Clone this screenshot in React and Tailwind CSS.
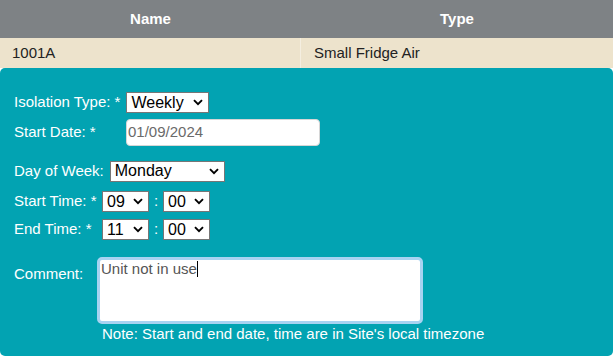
import React from 'react'

const FONT = { fontFamily: '"Liberation Sans", Arial, sans-serif' }

function Chevron() {
  return (
    <svg width="10" height="7" viewBox="0 0 10 7" className="shrink-0">
      <path d="M1 1.2 L5 5.2 L9 1.2" fill="none" stroke="#000" strokeWidth="1.9" />
    </svg>
  )
}

// Select look-alike: gray 1px border, square corners, bold chevron on the right
function Select({ value, width }) {
  return (
    <div
      className="flex items-center justify-between h-[21px] bg-white border border-[#767676] pl-[4px] pr-[5px] text-[16px] leading-none text-black"
      style={{ width }}
    >
      <span>{value}</span>
      <Chevron />
    </div>
  )
}

export default function App() {
  return (
    <div className="w-[613px] h-[358px] bg-white overflow-hidden" style={FONT}>
      <div className="grid grid-cols-[301px_312px] h-[38px] bg-[#7e8285] text-white font-bold text-[15px]">
        <div className="flex items-center justify-center">Name</div>
        <div className="flex items-center justify-center">Type</div>
      </div>
      <div className="grid grid-cols-[301px_312px] h-[30px] bg-[#ede3cc] text-[#222] text-[15px]">
        <div className="flex items-center pl-[12px] border-r border-[#f4eee0]">1001A</div>
        <div className="flex items-center pl-[13px]">Small Fridge Air</div>
      </div>

      <div className="h-[288px] bg-[#02a3b2] rounded-[5px] pl-[14px] pt-[24px] text-white text-[15px]">
        <div className="flex items-center h-[21px]">
          <span className="mr-[6px]">Isolation Type: *</span>
          <Select value="Weekly" width={83} />
        </div>

        <div className="flex items-center h-[27px] mt-[6px]">
          <span className="w-[112px]">Start Date: *</span>
          <div className="flex items-center w-[194px] h-[27px] bg-white rounded-[4px] border border-[#d6d6d6] pl-[1px] text-[#6a6a6a] text-[15px]">
            01/09/2024
          </div>
        </div>

        <div className="flex items-center h-[22px] mt-[14px]">
          <span className="mr-[6px]">Day of Week:</span>
          <Select value="Monday" width={115} />
        </div>

        <div className="flex items-center h-[21px] mt-[9px]">
          <span className="w-[88px]">Start Time: *</span>
          <Select value="09" width={47} />
          <span className="w-[14px] text-center">:</span>
          <Select value="00" width={47} />
        </div>

        <div className="flex items-center h-[21px] mt-[7px]">
          <span className="w-[88px]">End Time: *</span>
          <Select value="11" width={47} />
          <span className="w-[14px] text-center">:</span>
          <Select value="00" width={47} />
        </div>

        <div className="flex items-start mt-[17px]">
          <span className="w-[83px] pt-[6px]">Comment:</span>
          <div>
            <div className="w-[326px] h-[67px] rounded-[5px] border-[3px] border-[#a8d3f1] bg-white px-[1px] text-[#555] text-[15px] leading-[18px]">
              Unit not in use<span className="inline-block w-px h-[16px] bg-black align-[-3px]" />
            </div>
            <div className="pl-[5px] mt-[1px] leading-[18px]">Note: Start and end date, time are in Site's local timezone</div>
          </div>
        </div>
      </div>
    </div>
  )
}
